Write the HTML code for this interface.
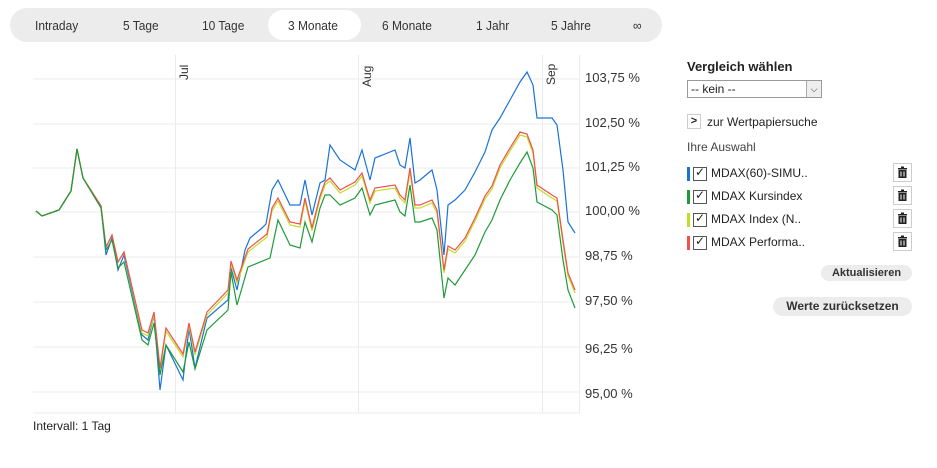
<!DOCTYPE html>
<html><head><meta charset="utf-8"><style>
body{margin:0;width:937px;height:468px;background:#fff;font-family:"Liberation Sans",sans-serif;position:relative;overflow:hidden;color:#222}
.tabs{position:absolute;left:10px;top:8px;width:652px;height:34px;background:#ececec;border-radius:17px}
.act{position:absolute;left:268px;top:10px;width:93px;height:30px;background:#fff;border-radius:15px}
.tab{position:absolute;top:18px;font-size:13px;color:#333;transform:scaleX(.92);transform-origin:left}
.lab{position:absolute;left:585px;font-size:13px;color:#333}
.r{position:absolute;font-size:12px;color:#222}
.del{position:absolute;left:893px;width:17px;height:17px;border:1px solid #ccc;background:#fff}
.chk{position:absolute;left:693px;width:12px;height:12px;border:1px solid #555}
.btn{position:absolute;background:#ececec;border-radius:10px;font-size:11px;font-weight:bold;text-align:center;color:#333}
</style></head><body>
<div class="tabs"></div><div class="act"></div>
<span class="tab" style="left:35px">Intraday</span><span class="tab" style="left:123px">5 Tage</span><span class="tab" style="left:202px">10 Tage</span><span class="tab" style="left:288px">3 Monate</span>
<span class="tab" style="left:382px">6 Monate</span><span class="tab" style="left:476px">1 Jahr</span><span class="tab" style="left:551px">5 Jahre</span><span class="tab" style="left:633px">∞</span>
<svg style="position:absolute;left:0;top:0" width="680" height="468">
<g stroke="#ebebeb" stroke-width="1">
<line x1="33" y1="79" x2="580" y2="79"/><line x1="33" y1="124" x2="580" y2="124"/><line x1="33" y1="168" x2="580" y2="168"/><line x1="33" y1="212" x2="580" y2="212"/><line x1="33" y1="257" x2="580" y2="257"/><line x1="33" y1="302" x2="580" y2="302"/><line x1="33" y1="347" x2="580" y2="347"/><line x1="33" y1="392" x2="580" y2="392"/>
<line x1="175.5" y1="55" x2="175.5" y2="413"/><line x1="358.5" y1="55" x2="358.5" y2="413"/><line x1="542.5" y1="55" x2="542.5" y2="413"/><line x1="579.5" y1="55" x2="579.5" y2="413"/><line x1="33" y1="413" x2="580" y2="413"/>
</g>
<g font-size="12" fill="#333"><text transform="translate(188,80) rotate(-90)">Jul</text><text transform="translate(371,87) rotate(-90)">Aug</text><text transform="translate(555,85) rotate(-90)">Sep</text></g>
<g fill="none" stroke-width="1.2" id="g">
<polyline id="b" stroke="#1a73d9" points="36,211 42,216 59,210 71,191 77,149 83,178 101,206 106,255 112,238 118,270 124,255 142,335 148,340 154,315 160,390 166,345 183,380 189,328 195,368 207,318 228,300 231,268 237,290 245,250 250,238 262,228 266,224 272,190 278,180 290,205 300,205 305,180 312,215 320,183 325,180 330,145 340,160 355,170 362,150 370,180 375,158 395,150 400,165 405,168 410,138 415,183 420,180 432,170 437,190 444,255 448,205 455,200 465,190 475,172 485,152 492,130 500,118 510,100 520,82 527,72 533,85 537,118 552,118 557,125 563,170 568,222 575,233"/>
<polyline id="rr" stroke="#f05050" points="36,211 42,216 59,210 71,191 77,149 83,178 101,206 106,247 112,235 118,262 124,252 142,330 148,333 154,312 160,368 166,328 183,354 189,323 195,352 207,312 228,290 231,261 237,280 248,249 267,234 272,208 278,198 290,222 300,224 305,198 312,228 320,196 325,182 330,178 340,190 355,182 362,173 370,200 375,188 395,185 400,195 405,200 410,168 415,205 420,205 432,200 437,210 444,270 448,246 455,250 465,238 475,218 485,196 492,186 500,165 510,148 520,132 527,134 533,150 537,185 552,195 557,198 563,240 568,273 575,290"/>
<polyline id="gg" stroke="#1f9a3a" points="36,211 42,216 59,210 71,191 77,149 83,178 101,208 106,250 112,240 118,268 124,262 142,340 148,345 154,323 160,375 166,345 183,372 189,342 195,369 207,330 228,310 231,272 237,305 248,267 270,258 278,220 290,245 300,248 305,222 312,242 320,208 325,195 330,195 340,205 355,198 362,188 370,215 375,205 395,200 400,212 405,216 410,185 415,222 420,222 432,218 437,230 444,298 448,278 455,285 465,270 475,255 485,232 492,220 500,200 510,180 520,163 527,152 533,168 537,202 552,210 557,215 563,260 568,290 575,308"/>
</g>
<text x="33" y="430" font-size="12" fill="#222">Intervall: 1 Tag</text>
</svg>
<script>
var r=document.getElementById('rr'),p=r.getAttribute('points').split(' ').map(function(s){var a=s.split(',');return a[0]+','+(+a[1]+(+a[0]>140?3:0))}).join(' ');
var y=document.createElementNS('http://www.w3.org/2000/svg','polyline');y.setAttribute('points',p);y.setAttribute('stroke','#bfe023');
document.getElementById('g').insertBefore(y,r);
</script>
<div class="lab" style="top:70px">103,75 %</div><div class="lab" style="top:115px">102,50 %</div><div class="lab" style="top:159px">101,25 %</div><div class="lab" style="top:203px">100,00 %</div><div class="lab" style="top:248px">98,75 %</div><div class="lab" style="top:293px">97,50 %</div><div class="lab" style="top:341px">96,25 %</div><div class="lab" style="top:386px">95,00 %</div>
<div class="r" style="left:687px;top:59px;font-weight:bold;font-size:13px">Vergleich wählen</div>
<div style="position:absolute;left:687px;top:80px;width:130px;height:16px;border:1px solid #999;font-size:12px;line-height:16px;padding-left:3px;box-sizing:content-box">-- kein --<span style="position:absolute;right:0;top:0;width:14px;height:16px;border-left:1px solid #aaa;background:#eee;font-size:9px;text-align:center">⌵</span></div>
<div style="position:absolute;left:687px;top:114px;width:12px;height:13px;border:1px solid #ccc;font-size:11px;font-weight:bold;text-align:center;line-height:13px">&gt;</div>
<div class="r" style="left:707px;top:115px">zur Wertpapiersuche</div>
<div class="r" style="left:687px;top:140px;color:#444">Ihre Auswahl</div>
<div style="position:absolute;left:687px;top:167px;width:3px;height:14px;background:#1a73d9"></div>
<div style="position:absolute;left:687px;top:190px;width:3px;height:14px;background:#1f9a3a"></div>
<div style="position:absolute;left:687px;top:213px;width:3px;height:14px;background:#bfe023"></div>
<div style="position:absolute;left:687px;top:236px;width:3px;height:14px;background:#f05050"></div>
<div class="chk" style="top:167px"></div><div class="chk" style="top:190px"></div><div class="chk" style="top:213px"></div><div class="chk" style="top:236px"></div>
<div class="r" style="left:695px;top:165px;font-size:12px">✓</div><div class="r" style="left:695px;top:188px;font-size:12px">✓</div><div class="r" style="left:695px;top:211px;font-size:12px">✓</div><div class="r" style="left:695px;top:234px;font-size:12px">✓</div>
<div class="r" style="left:711px;top:166px">MDAX(60)-SIMU..</div><div class="r" style="left:711px;top:189px">MDAX Kursindex</div><div class="r" style="left:711px;top:212px">MDAX Index (N..</div><div class="r" style="left:711px;top:235px">MDAX Performa..</div>
<div class="del" style="top:163px"></div><div class="del" style="top:186px"></div><div class="del" style="top:209px"></div><div class="del" style="top:232px"></div>
<svg style="position:absolute;left:893px;top:163px" width="19" height="92"><g fill="#222"><g id="t"><rect x="5" y="5" width="9" height="1.5"/><rect x="8" y="3.5" width="3" height="1.5"/><rect x="5.5" y="7" width="8" height="8"/></g><use href="#t" y="23"/><use href="#t" y="46"/><use href="#t" y="69"/></g><g fill="#fff"><rect x="7.5" y="8.5" width="1" height="5"/><rect x="10.5" y="8.5" width="1" height="5"/><rect x="7.5" y="31.5" width="1" height="5"/><rect x="10.5" y="31.5" width="1" height="5"/><rect x="7.5" y="54.5" width="1" height="5"/><rect x="10.5" y="54.5" width="1" height="5"/><rect x="7.5" y="77.5" width="1" height="5"/><rect x="10.5" y="77.5" width="1" height="5"/></g></svg>
<div class="btn" style="left:821px;top:265px;width:91px;height:16px;line-height:16px">Aktualisieren</div>
<div class="btn" style="left:773px;top:297px;width:139px;height:19px;line-height:19px;font-size:12px">Werte zurücksetzen</div>
</body></html>
